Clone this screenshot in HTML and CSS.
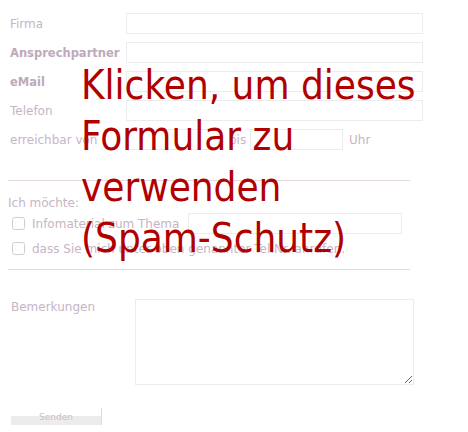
FILE: index.html
```html
<!DOCTYPE html>
<html lang="de">
<head>
    <meta charset="UTF-8">
    <title>Kontakt</title>
    <link rel="stylesheet" href="styles.css">
</head>
<body>
    <div class="wrap">
        <form class="kontakt">
            <div class="row">
                <label class="lbl">Firma</label>
                <input type="text" class="field">
            </div>
            <div class="row">
                <label class="lbl bold">Ansprechpartner</label>
                <input type="text" class="field">
            </div>
            <div class="row">
                <label class="lbl bold">eMail</label>
                <input type="text" class="field">
            </div>
            <div class="row">
                <label class="lbl">Telefon</label>
                <input type="text" class="field">
            </div>
            <div class="row">
                <label class="lbl">erreichbar von</label>
                <input type="text" class="time">
                <span class="txt bis">bis</span>
                <input type="text" class="time">
                <span class="txt uhr">Uhr</span>
            </div>

            <hr class="line first">

            <div class="want">Ich möchte:</div>
            <div class="check">
                <input type="checkbox" class="box">
                <span class="txt">Infomaterial zum Thema</span>
                <input type="text" class="thema">
            </div>
            <div class="check">
                <input type="checkbox" class="box">
                <span class="txt">dass Sie mich unter oben genannter Tel.Nr. anrufen.</span>
            </div>

            <hr class="line second">

            <div class="row notes">
                <label class="lbl">Bemerkungen</label>
                <textarea class="area"></textarea>
            </div>

            <button type="button" class="send">Senden</button>
        </form>

        <div class="cover">Klicken, um dieses Formular zu verwenden (Spam-Schutz)</div>
    </div>
</body>
</html>
```

FILE: styles.css
```css
body {
    margin: 0;
    background: #fff;
    font-family: "DejaVu Sans", Verdana, sans-serif;
    font-size: 12px;
}
.wrap {
    position: relative;
    width: 468px;
    height: 432px;
    overflow: hidden;
}
.kontakt {
    padding: 13px 0 0 8px;
}
.row {
    display: flex;
    align-items: center;
    height: 21px;
    margin-bottom: 8px;
}
.lbl {
    width: 116px;
    padding-left: 2px;
    flex: none;
    color: #c6b5c6;
}
.bold {
    font-weight: bold;
    font-size: 11.5px;
    color: #bcaabb;
}
.txt {
    color: #c6b5c6;
    white-space: nowrap;
}
input, textarea {
    border: 1px solid #ececec;
    background: #fff;
    margin: 0;
    padding: 0;
    box-sizing: border-box;
    font: inherit;
    flex: none;
}
.field {
    width: 297px;
    height: 21px;
}
.time {
    width: 93px;
    height: 21px;
}
.bis {
    margin: 0 7px 0 10px;
    width: 14px;
}
.uhr {
    margin-left: 6px;
}
.line {
    border: none;
    border-top: 1px solid #e4dade;
    margin: 30px 0 0 0;
    width: 402px;
    height: 0;
}
.want {
    margin-top: 15px;
    color: #c6b5c6;
    height: 16px;
}
.check {
    display: flex;
    align-items: center;
    height: 21px;
    margin-top: 1px;
}
.check + .check {
    margin-top: 4px;
}
.box {
    width: 13px;
    height: 13px;
    margin: 0 7px 0 4px;
    opacity: 0.35;
}
.thema {
    width: 214px;
    height: 21px;
    margin-left: 9px;
}
.second {
    margin-top: 10px;
}
.notes {
    margin-top: 29px;
    align-items: flex-start;
    height: auto;
}
.notes .lbl {
    width: 124px;
    padding-left: 3px;
    margin-top: 1px;
}
.area {
    width: 279px;
    height: 86px;
    resize: both;
}
.send {
    display: block;
    margin: 23px 0 0 3px;
    width: 91px;
    height: 17px;
    padding: 1px 0 0 0;
    border: none;
    border-right: 1px solid #dcdcdc;
    background: linear-gradient(to bottom, #fff 0, #fff 8px, #ececec 8px);
    color: #cbbccb;
    font-family: "DejaVu Sans", sans-serif;
    font-size: 9px;
    line-height: 11px;
}
.cover {
    position: absolute;
    left: 81px;
    top: 60px;
    width: 340px;
    font-family: "DejaVu Sans Condensed", "DejaVu Sans", sans-serif;
    font-stretch: condensed;
    font-size: 40px;
    line-height: 51px;
    color: #b00000;
    cursor: pointer;
}
```
